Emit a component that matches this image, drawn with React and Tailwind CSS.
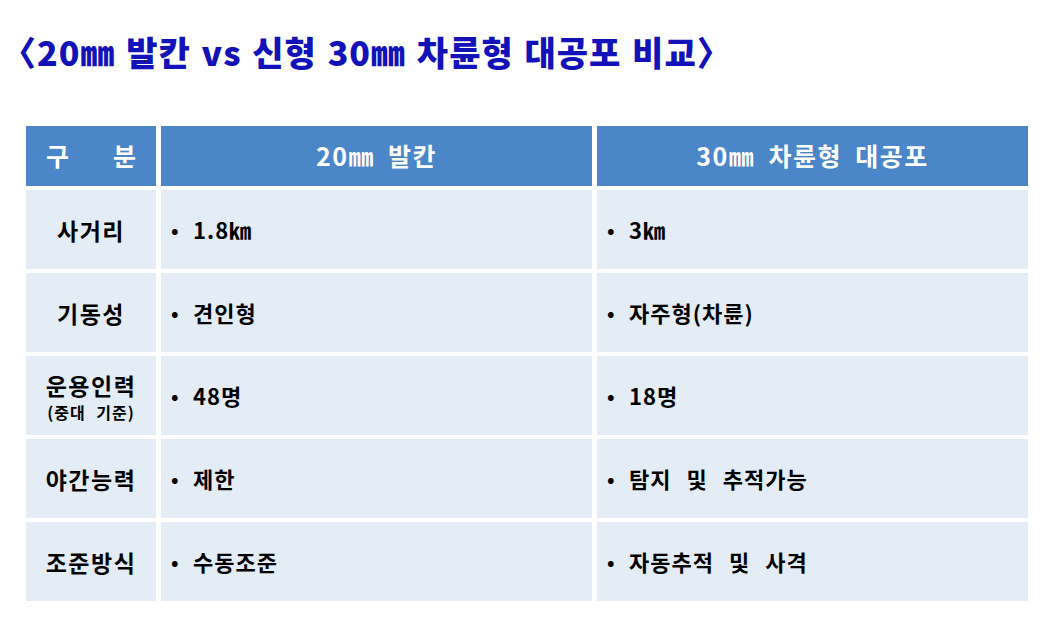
import React from "react";

const rows = [
  { label: "사거리", a: "1.8㎞", b: "3㎞" },
  { label: "기동성", a: "견인형", b: "자주형(차륜)" },
  { label: "운용인력", sub: "(중대 기준)", a: "48명", b: "18명" },
  { label: "야간능력", a: "제한", b: "탐지 및 추적가능" },
  { label: "조준방식", a: "수동조준", b: "자동추적 및 사격" },
];

const font = { fontFamily: '"Noto Sans CJK KR", "Noto Sans", sans-serif' };

function Cell({ children }) {
  return (
    <div className="bg-[#e4ecf6] flex items-center pl-[10px] text-[22px] font-bold text-black">
      <span className="w-[22px] text-[20px] leading-none">•</span>
      <span className="tracking-[1px] [word-spacing:9px]">{children}</span>
    </div>
  );
}

export default function App() {
  return (
    <div className="w-[1058px] h-[628px] bg-white relative overflow-hidden" style={font}>
      <div className="pl-[2px] pt-[27px] h-[126px]">
        <h1 className="text-[34px] leading-[50px] font-black text-[#1212b8] tracking-[1px] [word-spacing:2px] whitespace-nowrap">
          〈20㎜ 발칸 vs 신형 30㎜ 차륜형 대공포 비교〉
        </h1>
      </div>
      <div className="ml-[26px] w-[1002px] grid grid-cols-[130px_431px_431px] grid-rows-[60px_repeat(5,79px)] gap-x-[5px] gap-y-[4px]">
        <div className="bg-[#4a86c8] flex items-center justify-center text-white text-[25px] font-bold gap-[44px]">
          <span>구</span>
          <span>분</span>
        </div>
        <div className="bg-[#4a86c8] flex items-center justify-center text-white text-[25px] font-bold tracking-[1.5px] [word-spacing:6px]">
          20㎜ 발칸
        </div>
        <div className="bg-[#4a86c8] flex items-center justify-center text-white text-[25px] font-bold tracking-[1.5px] [word-spacing:6px]">
          30㎜ 차륜형 대공포
        </div>
        {rows.map((r) => (
          <React.Fragment key={r.label}>
            <div className="bg-[#e4ecf6] flex flex-col items-center justify-center text-black font-bold">
              <span className="text-[23px] leading-[32px] tracking-[1.5px]">{r.label}</span>
              {r.sub && (
                <span className="text-[16px] leading-[22px] font-semibold tracking-[1px] [word-spacing:6px]">{r.sub}</span>
              )}
            </div>
            <Cell>{r.a}</Cell>
            <Cell>{r.b}</Cell>
          </React.Fragment>
        ))}
      </div>
    </div>
  );
}
